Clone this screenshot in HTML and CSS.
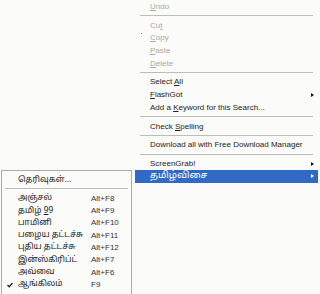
FILE: index.html
```html
<!DOCTYPE html>
<html>
<head>
  <title>Context menu</title>
  <link rel="stylesheet" href="styles.css">
</head>
<body>
  <div class="screen">
    <!-- Tamil keyboard submenu -->
    <div class="side">
      <div class="submenu">
        <div class="item"><span class="label">தெரிவுகள்...</span></div>
        <div class="sep"></div>
        <div class="item"><span class="label">அஞ்சல்</span><span class="key">Alt+F8</span></div>
        <div class="item"><span class="label">தமிழ் <u>9</u>9</span><span class="key">Alt+F9</span></div>
        <div class="item"><span class="label">பாமினி</span><span class="key">Alt+F10</span></div>
        <div class="item"><span class="label">பழைய தட்டச்சு</span><span class="key">Alt+F11</span></div>
        <div class="item"><span class="label">புதிய தட்டச்சு</span><span class="key">Alt+F12</span></div>
        <div class="item"><span class="label">இன்ஸ்கிரிப்ட்</span><span class="key">Alt+F7</span></div>
        <div class="item"><span class="label">அவ்வை</span><span class="key">Alt+F6</span></div>
        <div class="item">
          <svg class="check" width="6" height="6" viewBox="0 0 6 6"><path d="M0.5 3 L2.2 4.8 L5.5 1" fill="none" stroke="#222" stroke-width="1.3"/></svg>
          <span class="label">ஆங்கிலம்</span><span class="key">F9</span>
        </div>
      </div>
    </div>

    <!-- main context menu -->
    <div class="menu">
      <span class="dot"></span>
      <div class="item off"><span class="label"><u>U</u>ndo</span></div>
      <div class="sep"></div>
      <div class="item off"><span class="label">Cu<u>t</u></span></div>
      <div class="item off"><span class="label"><u>C</u>opy</span></div>
      <div class="item off"><span class="label"><u>P</u>aste</span></div>
      <div class="item off"><span class="label"><u>D</u>elete</span></div>
      <div class="sep"></div>
      <div class="item"><span class="label">Select <u>A</u>ll</span></div>
      <div class="item"><span class="label"><u>F</u>lashGot</span><span class="arrow"></span></div>
      <div class="item"><span class="label">Add a <u>K</u>eyword for this Search...</span></div>
      <div class="sep"></div>
      <div class="item"><span class="label">Check <u>S</u>pelling</span></div>
      <div class="sep"></div>
      <div class="item"><span class="label">Download all with Free Download Manager</span></div>
      <div class="sep"></div>
      <div class="item"><span class="label">ScreenGrab!</span><span class="arrow"></span></div>
      <div class="item active"><span class="label tamil">தமிழ்விசை</span><span class="arrow"></span></div>
    </div>
  </div>
</body>
</html>
```

FILE: styles.css
```css
/* page */
body {
  margin: 0;
  background-color: #fbfcf9;
  font-family: "Liberation Sans", Arial, sans-serif;
  font-size: 8px;
  color: #222;
}

.screen {
  display: flex;
  align-items: flex-start;
  width: 320px;
  height: 294px;
  overflow: hidden;
}

u {
  text-decoration-thickness: 1px;
  text-underline-offset: 1px;
}

/* main menu */
.menu {
  position: relative;
  width: 185px;
  margin-left: 3px;
  background-color: #fbfcf9;
}

.menu .item {
  display: flex;
  align-items: center;
  height: 12.65px;
  padding-left: 15px;
  padding-right: 6px;
}

.menu .item .label {
  flex: 1;
  white-space: nowrap;
}

.menu .off {
  color: #a7aaa4;
}

.menu .sep {
  height: 6.2px;
  margin: 0 7px 0 5px;
  display: flex;
  align-items: center;
}

.menu .sep::before,
.submenu .sep::before {
  content: "";
  flex: 1;
  height: 1px;
  background-color: #bcbfb8;
}

.menu .active {
  background-color: #316ac5;
  color: #fff;
  margin-right: 2px;
  padding-right: 4px;
}

.menu .tamil {
  font-family: "Noto Sans Tamil", "Lohit Tamil", "Liberation Sans", sans-serif;
  font-size: 9.6px;
  line-height: 1;
}

.arrow {
  width: 0;
  height: 0;
  border-top: 2.5px solid transparent;
  border-bottom: 2.5px solid transparent;
  border-left: 3px solid #111;
}

.active .arrow {
  border-left-color: #fff;
}

.dot {
  position: absolute;
  left: 6px;
  top: 33px;
  width: 1px;
  height: 1px;
  background-color: #777;
}

/* Tamil submenu */
.side {
  margin-top: 170px;
  margin-left: 1px;
}

.submenu {
  width: 131px;
  height: 130px;
  border-top: 1px solid #a9aba6;
  border-left: 1px solid #a9aba6;
  border-right: 1px solid #a9aba6;
  box-sizing: border-box;
  padding-top: 2.5px;
  background-color: #fbfcf9;
  font-family: "Noto Sans Tamil", "Lohit Tamil", "Liberation Sans", sans-serif;
}

.submenu .item {
  position: relative;
  display: flex;
  align-items: center;
  height: 12.3px;
  padding-left: 16px;
}

.submenu .label {
  width: 73px;
  white-space: nowrap;
  font-size: 8.4px;
  color: #1a1a1a;
}

.submenu .key {
  font-family: "Liberation Sans", Arial, sans-serif;
  font-size: 8px;
  color: #333;
}

.submenu .sep {
  display: flex;
  align-items: center;
  height: 6.3px;
  margin: 0 3px 0 3px;
}

.check {
  position: absolute;
  left: 5px;
  top: 4px;
}
```
